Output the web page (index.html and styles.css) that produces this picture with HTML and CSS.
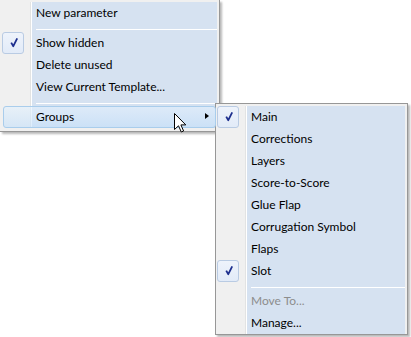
FILE: index.html
```html
<!DOCTYPE html>
<html>
<head>
    <title>Parameter menu</title>
    <link rel="stylesheet" href="styles.css">
</head>
<body>
    <div class="menu menu-main">
        <div class="item"><span class="gutter"></span><span class="label">New parameter</span></div>
        <div class="sep"><span class="gutter"></span><span class="label"><i></i></span></div>
        <div class="item"><span class="gutter"><span class="check"><svg width="20" height="20" viewBox="0 0 20 20"><path d="M8.2 9.6 L10.3 13.2 L14.2 5.4" fill="none" stroke="#1e2f8e" stroke-width="1.8" stroke-linejoin="round"/></svg></span></span><span class="label">Show hidden</span></div>
        <div class="item"><span class="gutter"></span><span class="label">Delete unused</span></div>
        <div class="item"><span class="gutter"></span><span class="label">View Current Template...</span></div>
        <div class="sep"><span class="gutter"></span><span class="label"><i></i></span></div>
        <div class="item hot"><span class="gutter"></span><span class="label">Groups<b class="arrow"></b></span></div>
    </div>

    <svg class="cursor" width="13" height="20" viewBox="0 0 13 20">
        <path d="M0.5 0.5 L0.5 16.5 L4.5 12.8 L7.3 19 L9.6 18 L6.9 11.9 L11.8 11.9 Z" fill="#fff" stroke="#000" stroke-width="1"/>
    </svg>

    <div class="menu menu-sub">
        <div class="item"><span class="gutter"><span class="check"><svg width="20" height="20" viewBox="0 0 20 20"><path d="M8.2 9.6 L10.3 13.2 L14.2 5.4" fill="none" stroke="#1e2f8e" stroke-width="1.8" stroke-linejoin="round"/></svg></span></span><span class="label">Main</span></div>
        <div class="item"><span class="gutter"></span><span class="label">Corrections</span></div>
        <div class="item"><span class="gutter"></span><span class="label">Layers</span></div>
        <div class="item"><span class="gutter"></span><span class="label">Score-to-Score</span></div>
        <div class="item"><span class="gutter"></span><span class="label">Glue Flap</span></div>
        <div class="item"><span class="gutter"></span><span class="label">Corrugation Symbol</span></div>
        <div class="item"><span class="gutter"></span><span class="label">Flaps</span></div>
        <div class="item"><span class="gutter"><span class="check"><svg width="20" height="20" viewBox="0 0 20 20"><path d="M8.2 9.6 L10.3 13.2 L14.2 5.4" fill="none" stroke="#1e2f8e" stroke-width="1.8" stroke-linejoin="round"/></svg></span></span><span class="label">Slot</span></div>
        <div class="sep"><span class="gutter"></span><span class="label"><i></i></span></div>
        <div class="item disabled"><span class="gutter"></span><span class="label">Move To...</span></div>
        <div class="item"><span class="gutter"></span><span class="label">Manage...</span></div>
    </div>
</body>
</html>
```

FILE: styles.css
```css
body {
    margin: 0;
    background: #fff;
    font-family: Lato, "Open Sans", sans-serif;
    font-size: 12px;
    color: #000;
    position: relative;
    width: 411px;
    height: 337px;
    overflow: hidden;
}
.menu {
    display: flex;
    flex-direction: column;
    background: #f0f0f0;
    border: 1px solid #979797;
    padding: 2px 1px 1px 1px;
    box-shadow: 2px 2px 2px rgba(0, 0, 0, 0.28);
    box-sizing: border-box;
}
.menu-main {
    width: 220px;
    border-top: none;
    border-left: none;
    padding: 2px 1px 3px 2px;
}
.menu-sub {
    position: absolute;
    left: 215px;
    top: 103px;
    width: 193px;
    padding-bottom: 0;
}
.item, .sep {
    display: flex;
    position: relative;
}
.item {
    height: 22px;
    line-height: 22px;
}
.sep {
    height: 8px;
}
.gutter {
    width: 28px;
    flex: none;
    border-right: 1px solid #e2e3e3;
    box-shadow: 1px 0 0 #fff;
    margin-right: 1px;
}
.label {
    flex: 1;
    background: #d6e2f1;
    padding-left: 4px;
    margin-right: 1px;
    white-space: nowrap;
    position: relative;
}
.sep .label i {
    display: block;
    margin-top: 5px;
    height: 1px;
    background: #fff;
}
.check {
    display: block;
    width: 20px;
    height: 20px;
    border: 1px solid #b9cbe3;
    border-radius: 3px;
    background: linear-gradient(#eef3fb, #e2ebf8);
}
.check svg {
    display: block;
}
.disabled .label {
    color: #8d8d8d;
}
.hot::before {
    content: "";
    position: absolute;
    left: 1px;
    right: 2px;
    top: 0;
    bottom: 0;
    border: 1px solid #a9cdec;
    border-radius: 3px;
    background: linear-gradient(rgba(226, 240, 253, 0.6), rgba(196, 224, 250, 0.6));
    z-index: 1;
}
.arrow {
    position: absolute;
    right: 8px;
    top: 7px;
    width: 0;
    height: 0;
    border-top: 3.5px solid transparent;
    border-bottom: 3.5px solid transparent;
    border-left: 4px solid #000;
    z-index: 2;
}
.hot .label {
    z-index: 2;
    background: transparent;
}
.hot {
    background: linear-gradient(to right, transparent 30px, #d6e2f1 30px, #d6e2f1 215px, transparent 215px);
}
.cursor {
    position: absolute;
    left: 174px;
    top: 113px;
    z-index: 5;
}
```
